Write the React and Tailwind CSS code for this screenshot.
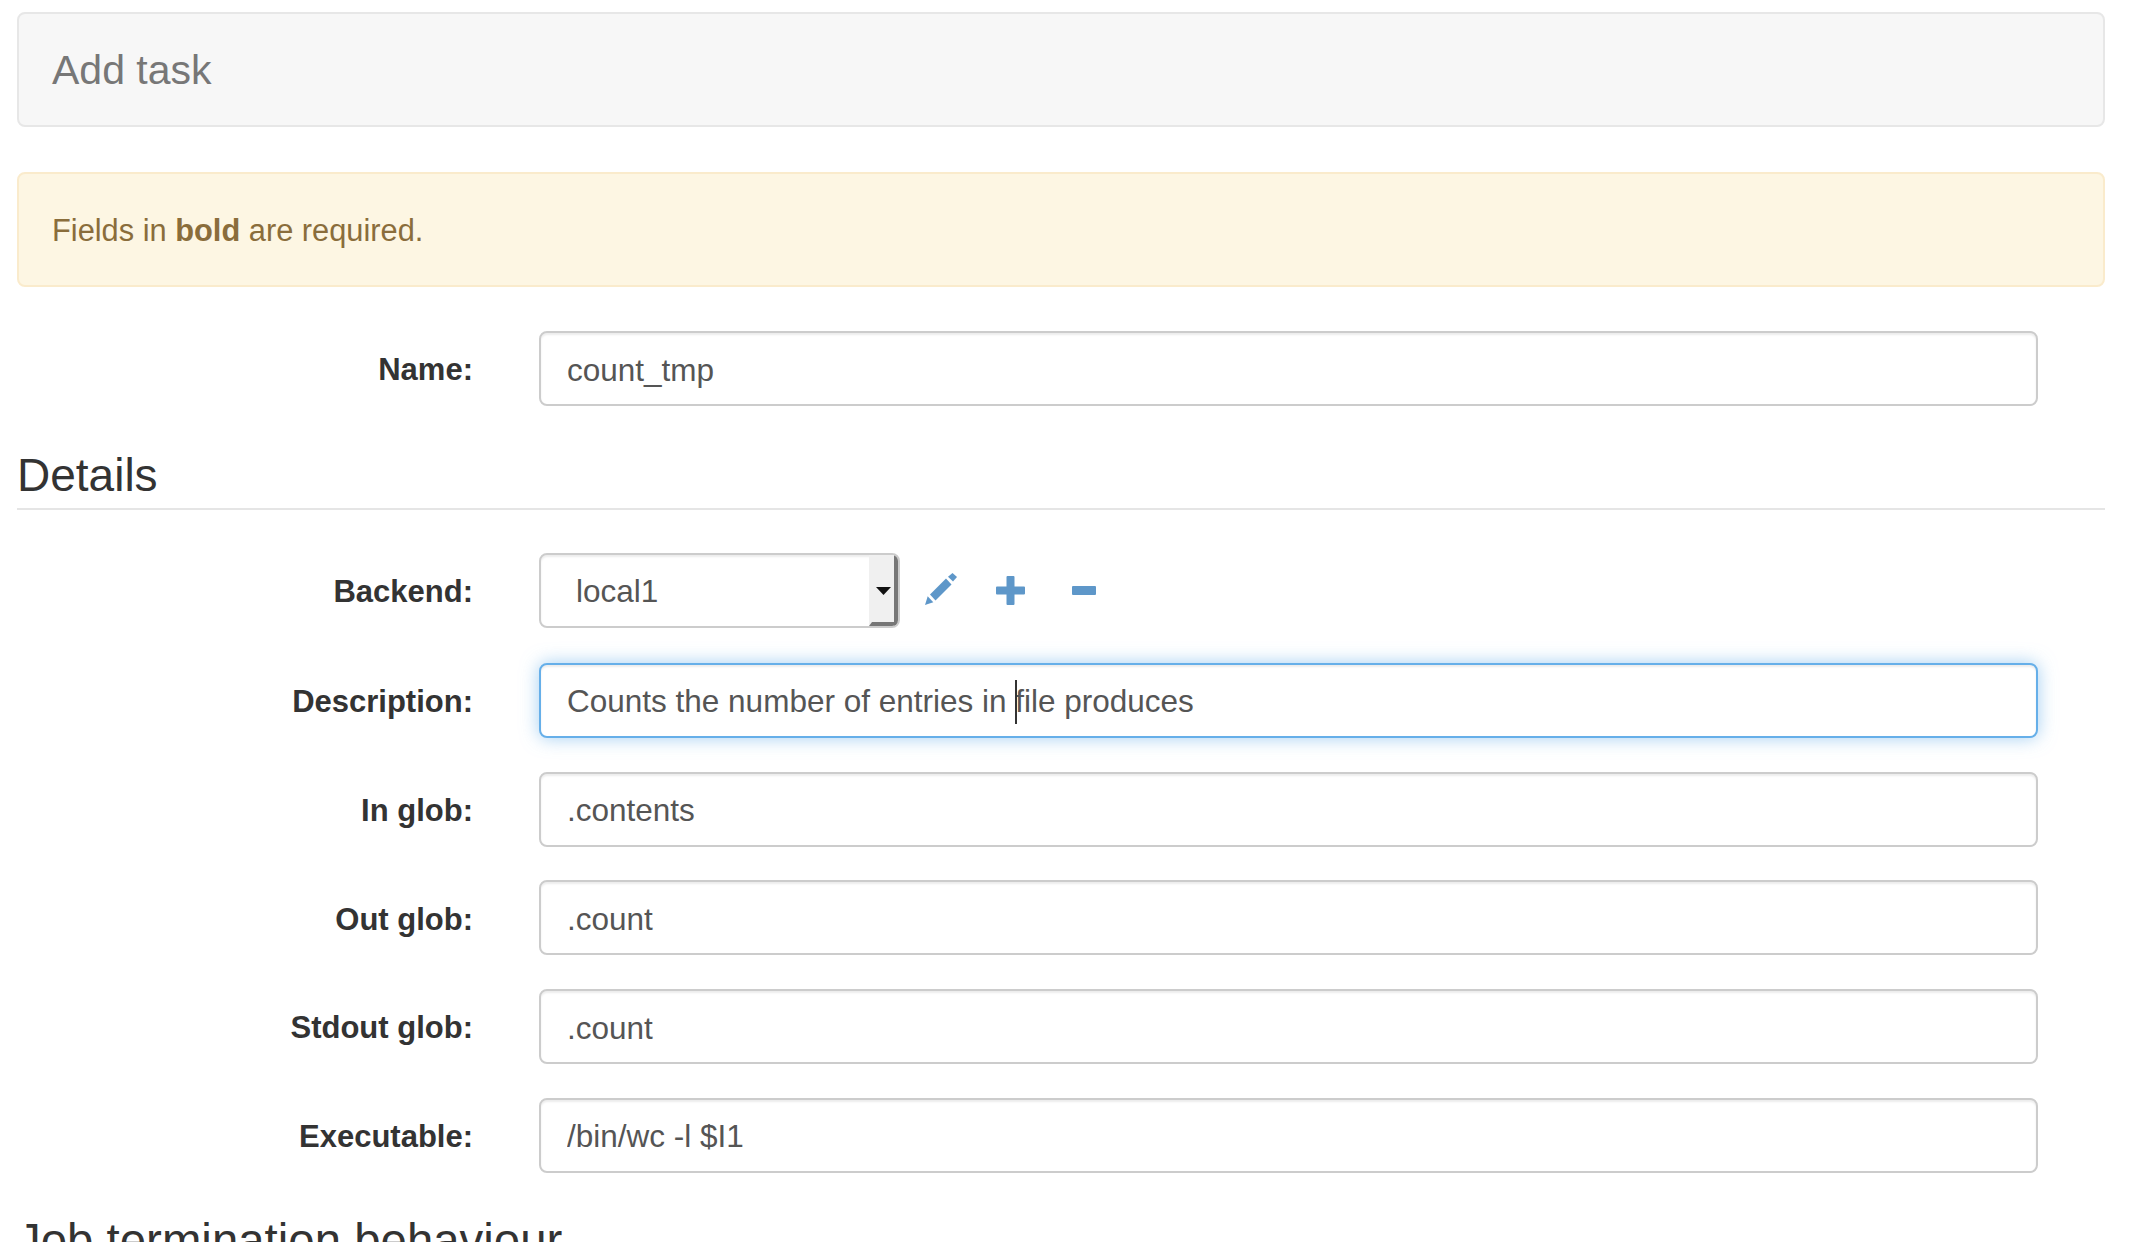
import React from 'react';

const Field = ({ label, value, focused, caret }) => (
  <div className="flex items-center h-[75px]">
    <label className="w-[456px] pt-[4px] text-right font-bold text-[31px] text-[#333]">{label}</label>
    <div className="relative ml-[66px] w-[1499px]">
      <input
        readOnly
        value={value}
        className={
          focused
            ? 'w-full h-[75px] pl-[26px] pr-[27px] pt-[2px] bg-white rounded-[8px] border-2 border-[#66afe9] text-[31.5px] text-[#555] outline-none shadow-[inset_0_2px_2px_rgba(0,0,0,0.075),0_0_18px_rgba(102,175,233,0.6)]'
            : 'w-full h-[75px] pl-[26px] pr-[27px] pt-[3px] bg-white rounded-[8px] border-2 border-[#ccc] text-[31.5px] text-[#555] outline-none shadow-[inset_0_2px_2px_rgba(0,0,0,0.075)]'
        }
      />
      {caret && <span className="absolute left-[476px] top-[17px] h-[44px] w-[2px] bg-[#333]" />}
    </div>
  </div>
);

export default function App() {
  return (
    <div className="h-[1242px] overflow-hidden bg-white pl-[17px] pr-[25px] pt-[12px] font-['Liberation_Sans',Arial,sans-serif]">
      <div className="h-[115px] flex items-center px-[33px] pt-[2px] bg-[#f7f7f7] border-2 border-[#e7e7e7] rounded-[8px]">
        <h2 className="text-[41px] text-[#777]">Add task</h2>
      </div>

      <div className="mt-[45px] h-[115px] flex items-center px-[33px] pt-[3px] bg-[#fdf6e3] border-2 border-[#faebcc] rounded-[8px] text-[30.8px] text-[#8a6d3b]">
        <p>Fields in <b>bold</b> are required.</p>
      </div>

      <div className="mt-[44px]">
        <Field label="Name:" value="count_tmp" />
      </div>

      <div className="mt-[44px] pb-[8px] border-b-2 border-[#e5e5e5]">
        <h3 className="text-[46px] leading-[50px] text-[#333]">Details</h3>
      </div>

      <div className="mt-[43px] flex items-center h-[75px]">
        <label className="w-[456px] pt-[4px] text-right font-bold text-[31px] text-[#333]">Backend:</label>
        <div className="ml-[66px] w-[361px] h-[75px] flex bg-white rounded-[8px] border-2 border-[#ccc] overflow-hidden shadow-[inset_0_2px_2px_rgba(0,0,0,0.075)]">
          <span className="flex-1 flex items-center pl-[35px] pt-[3px] text-[31.5px] text-[#555]">local1</span>
          <div className="w-[29px] flex items-center justify-center pt-[5px] bg-[#f0f0f0] border-l-[3px] border-l-[#f0f0f0] border-r-[4px] border-b-[4px] border-r-[#777] border-b-[#777]">
            <svg viewBox="0 0 15 8" className="w-[15px] h-[8px]"><path d="M0 0h15L7.5 8z" fill="#111" /></svg>
          </div>
        </div>
        <svg viewBox="0 0 32 32" className="ml-[25px] w-[32px] h-[32px] mb-[3px]" fill="#5e97c9">
          <path d="M0 32l2.7-8.7 5.6 6z" />
          <path d="M5 21.5L21 5.5l5.5 6-16 16z" />
          <path d="M23 3.8L27.5 0l4.5 4-4 4.5z" />
        </svg>
        <svg viewBox="0 0 29 29" className="ml-[39px] w-[29px] h-[29px]" fill="#5e97c9">
          <path d="M10.5 1a1 1 0 0 1 1-1h6a1 1 0 0 1 1 1v9.5H28a1 1 0 0 1 1 1v6a1 1 0 0 1-1 1h-9.5V28a1 1 0 0 1-1 1h-6a1 1 0 0 1-1-1v-9.5H1a1 1 0 0 1-1-1v-6a1 1 0 0 1 1-1h9.5z" />
        </svg>
        <svg viewBox="0 0 24 9" className="ml-[47px] w-[24px] h-[9px]" fill="#5e97c9">
          <rect width="24" height="9" rx="1" />
        </svg>
      </div>

      <div className="mt-[35px] flex flex-col gap-[33.7px]">
        <Field label="Description:" value="Counts the number of entries in file produces" focused caret />
        <Field label="In glob:" value=".contents" />
        <Field label="Out glob:" value=".count" />
        <Field label="Stdout glob:" value=".count" />
        <Field label="Executable:" value="/bin/wc -l $I1" />
      </div>

      <div className="mt-[43px]">
        <h3 className="text-[47.4px] leading-[50px] text-[#333]">Job termination behaviour</h3>
      </div>
    </div>
  );
}
